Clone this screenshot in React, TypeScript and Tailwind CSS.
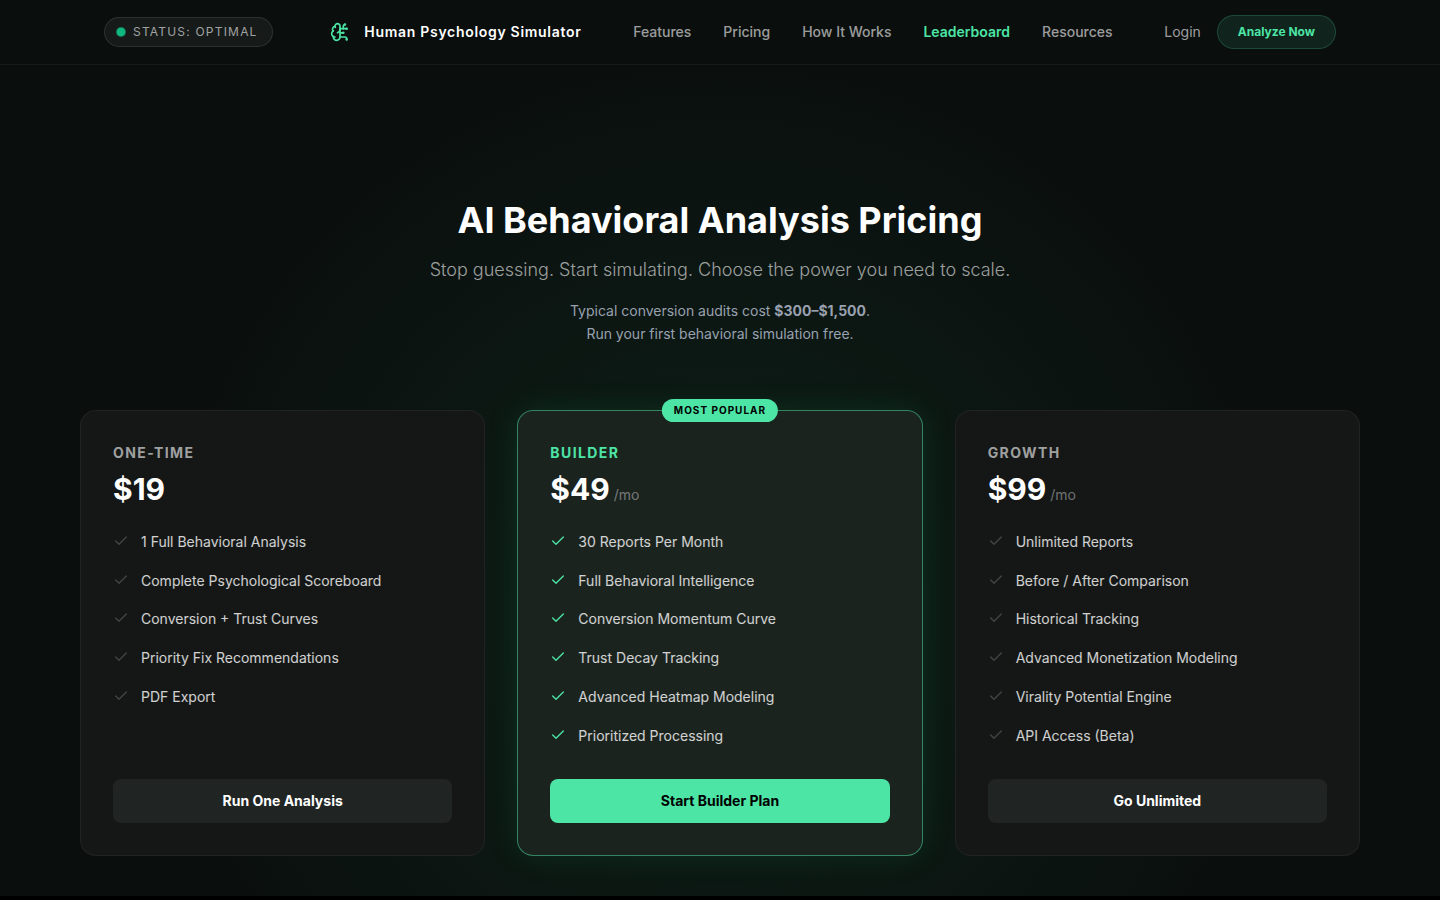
import clsx from "clsx"
import { BrainCircuit, Check } from "lucide-react"

const NAV_LINKS = [
  { label: "Features" },
  { label: "Pricing" },
  { label: "How It Works" },
  { label: "Leaderboard", active: true },
  { label: "Resources" },
]

const PLANS = [
  {
    name: "One-Time",
    price: "$19",
    features: [
      "1 Full Behavioral Analysis",
      "Complete Psychological Scoreboard",
      "Conversion + Trust Curves",
      "Priority Fix Recommendations",
      "PDF Export",
    ],
    cta: "Run One Analysis",
  },
  {
    name: "Builder",
    price: "$49",
    period: "/mo",
    popular: true,
    features: [
      "30 Reports Per Month",
      "Full Behavioral Intelligence",
      "Conversion Momentum Curve",
      "Trust Decay Tracking",
      "Advanced Heatmap Modeling",
      "Prioritized Processing",
    ],
    cta: "Start Builder Plan",
  },
  {
    name: "Growth",
    price: "$99",
    period: "/mo",
    features: [
      "Unlimited Reports",
      "Before / After Comparison",
      "Historical Tracking",
      "Advanced Monetization Modeling",
      "Virality Potential Engine",
      "API Access (Beta)",
    ],
    cta: "Go Unlimited",
  },
]

type Plan = (typeof PLANS)[number]

const Header = () => (
  <header className="border-b border-white/5 bg-[#0a0e0d]">
    <div className="mx-auto flex h-16 max-w-7xl items-center justify-between px-6">
      <div className="flex items-center gap-2 rounded-full border border-white/10 bg-white/5 py-1.5 pr-3.5 pl-3">
        <span className="size-2 rounded-full bg-[#10b981] ring-1 ring-[#10b981]/60" />
        <span className="text-xs tracking-widest text-white/60 uppercase">
          Status: Optimal
        </span>
      </div>

      <a href="#" className="ml-1 flex items-center gap-3">
        <span className="flex size-6 items-center justify-center">
          <BrainCircuit className="size-5 text-[#4ce5a5]" />
        </span>
        <span className="text-sm font-semibold tracking-wider text-white">
          Human Psychology Simulator
        </span>
      </a>

      <nav className="flex items-center gap-8">
        {NAV_LINKS.map(({ label, active }) => (
          <a
            key={label}
            href="#"
            className={clsx(
              "text-sm",
              active ? "font-semibold text-[#4ce5a5]" : "font-medium text-white/60",
            )}
          >
            {label}
          </a>
        ))}
      </nav>

      <div className="flex items-center gap-4">
        <a href="#" className="text-sm text-white/60">
          Login
        </a>
        <button className="rounded-full border border-[#4ce5a5]/20 bg-[#4ce5a5]/10 px-5 py-2 text-xs font-bold text-[#4ce5a5]">
          Analyze Now
        </button>
      </div>
    </div>
  </header>
)

const PlanCard = ({ plan }: { plan: Plan }) => (
  <article
    className={clsx(
      "relative flex flex-col rounded-2xl border p-8",
      plan.popular
        ? "border-[#4ce5a5]/50 bg-[#1b231f] shadow-[0_0_30px_rgba(20,175,95,0.15)]"
        : "border-white/5 bg-[#141716]",
    )}
  >
    {plan.popular && (
      <span className="absolute -top-3 left-1/2 -translate-x-1/2 rounded-full bg-[#4ce5a5] px-3 py-1 text-[10px] leading-[15px] font-bold tracking-widest whitespace-nowrap text-black uppercase">
        Most Popular
      </span>
    )}

    <h2
      className={clsx(
        "text-sm font-bold tracking-widest uppercase",
        plan.popular ? "text-[#4ce5a5]" : "text-white/60",
      )}
    >
      {plan.name}
    </h2>
    <p className="mt-2 flex items-baseline gap-1 text-3xl font-bold text-white">
      {plan.price}
      {plan.period && (
        <span className="text-sm font-normal text-white/40">{plan.period}</span>
      )}
    </p>

    <ul className="mt-6 mb-8 flex flex-1 flex-col gap-4">
      {plan.features.map((feature) => (
        <li
          key={feature}
          className="flex items-start gap-3 text-sm leading-relaxed text-white/80"
        >
          <Check
            className={clsx(
              "mt-0.5 size-4 shrink-0",
              plan.popular ? "text-[#4ce5a5]" : "text-white/20",
            )}
          />
          {feature}
        </li>
      ))}
    </ul>

    <button
      className={clsx(
        "rounded-lg py-3 text-sm font-bold",
        plan.popular ? "bg-[#4ce5a5] text-black" : "bg-[#202423] text-white",
      )}
    >
      {plan.cta}
    </button>
  </article>
)

const App = () => (
  <div className="min-h-screen bg-black font-[Inter,sans-serif] text-white">
    <div className="bg-[#0a0e0d]">
      <Header />
      <main className="bg-[radial-gradient(circle_at_50%_66%,#0e2018_0,#0a0e0d_600px)] px-20 pt-32 pb-10">
        <div className="text-center">
          <h1 className="text-4xl leading-[54px] font-bold">
            AI Behavioral Analysis Pricing
          </h1>
          <p className="mt-2 text-lg leading-relaxed font-light text-white/60">
            Stop guessing. Start simulating. Choose the power you need to scale.
          </p>
          <p className="mt-4 text-sm leading-relaxed text-gray-400">
            Typical conversion audits cost{" "}
            <strong className="font-bold">$300–$1,500</strong>.
            <br />
            Run your first behavioral simulation free.
          </p>
        </div>

        <section className="mx-auto mt-16 grid max-w-7xl grid-cols-3 gap-8">
          {PLANS.map((plan) => (
            <PlanCard key={plan.name} plan={plan} />
          ))}
        </section>
      </main>
    </div>
  </div>
)

export default App
